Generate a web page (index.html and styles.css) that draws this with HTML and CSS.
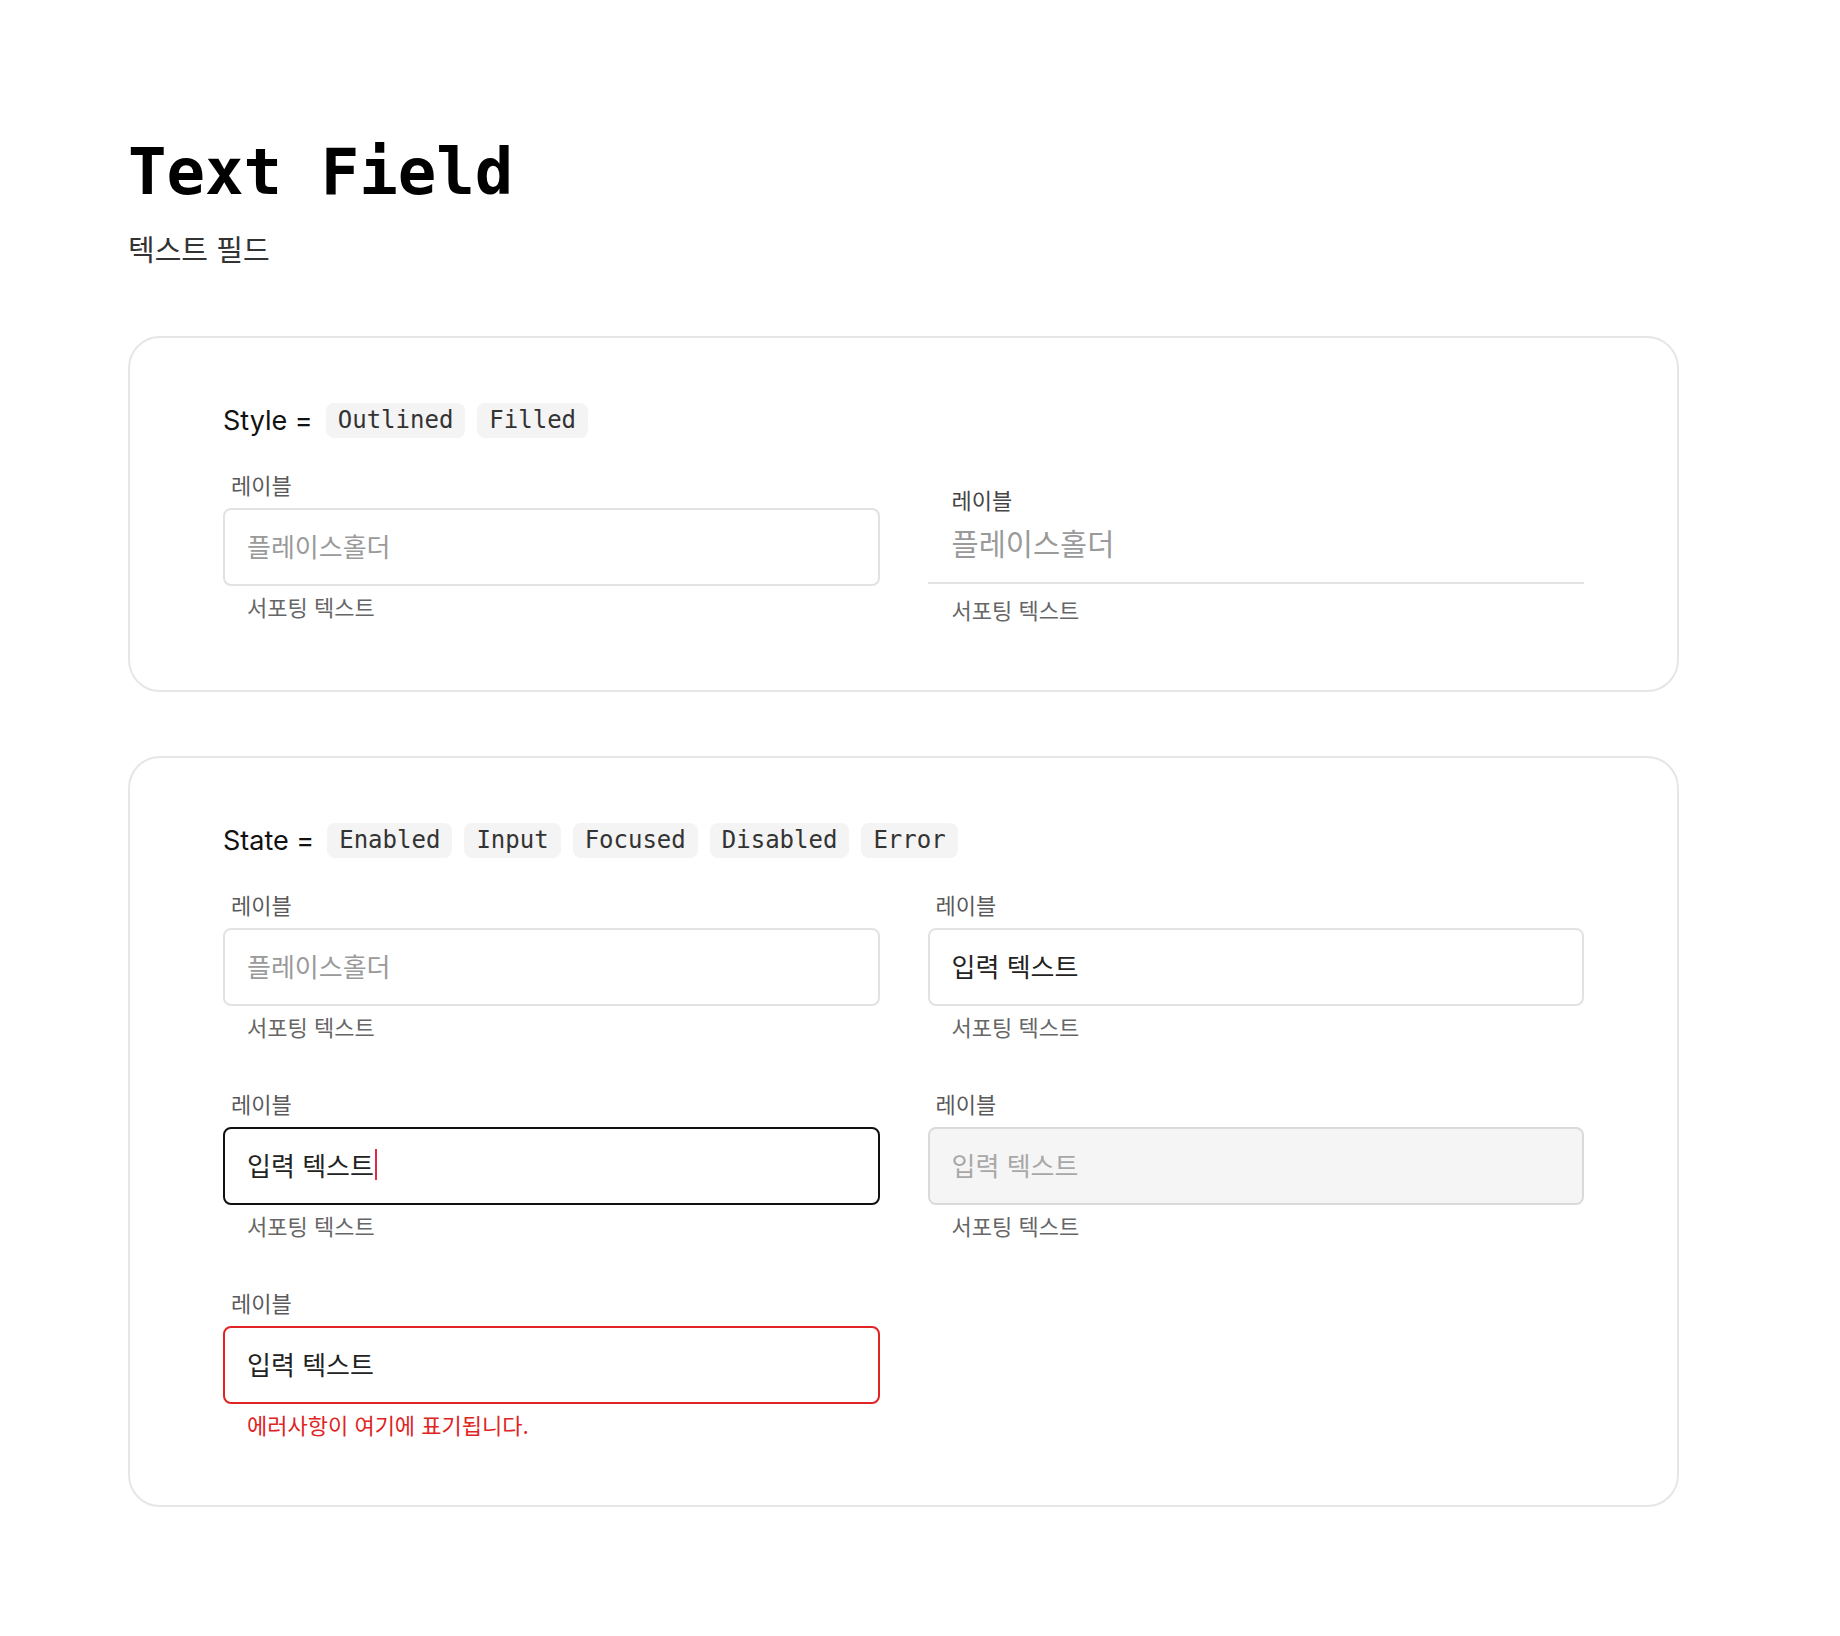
FILE: index.html
```html
<!DOCTYPE html>
<html lang="ko">
<head>
    <meta charset="UTF-8">
    <meta name="viewport" content="width=device-width, initial-scale=1.0">
    <title>Text Field</title>
    <link rel="stylesheet" href="styles.css">
</head>
<body>
    <main class="page">
        <h1 class="page-title">Text Field</h1>
        <p class="page-subtitle">텍스트 필드</p>

        <!-- Style variants -->
        <section class="card">
            <div class="prop-row">
                <span class="prop-name">Style =</span>
                <span class="chip">Outlined</span>
                <span class="chip">Filled</span>
            </div>
            <div class="field-grid">
                <div class="field">
                    <div class="field-label">레이블</div>
                    <div class="field-box is-placeholder">플레이스홀더</div>
                    <div class="field-help">서포팅 텍스트</div>
                </div>
                <div class="field">
                    <div class="filled-box">
                        <div class="filled-label">레이블</div>
                        <div class="filled-value">플레이스홀더</div>
                    </div>
                    <div class="field-help filled-help">서포팅 텍스트</div>
                </div>
            </div>
        </section>

        <!-- State variants -->
        <section class="card">
            <div class="prop-row">
                <span class="prop-name">State =</span>
                <span class="chip">Enabled</span>
                <span class="chip">Input</span>
                <span class="chip">Focused</span>
                <span class="chip">Disabled</span>
                <span class="chip">Error</span>
            </div>
            <div class="field-grid">
                <div class="field">
                    <div class="field-label">레이블</div>
                    <div class="field-box is-placeholder">플레이스홀더</div>
                    <div class="field-help">서포팅 텍스트</div>
                </div>
                <div class="field">
                    <div class="field-label">레이블</div>
                    <div class="field-box">입력 텍스트</div>
                    <div class="field-help">서포팅 텍스트</div>
                </div>
                <div class="field">
                    <div class="field-label">레이블</div>
                    <div class="field-box is-focused">입력 텍스트<span class="caret"></span></div>
                    <div class="field-help">서포팅 텍스트</div>
                </div>
                <div class="field">
                    <div class="field-label">레이블</div>
                    <div class="field-box is-disabled">입력 텍스트</div>
                    <div class="field-help">서포팅 텍스트</div>
                </div>
                <div class="field">
                    <div class="field-label">레이블</div>
                    <div class="field-box is-error">입력 텍스트</div>
                    <div class="field-help is-error">에러사항이 여기에 표기됩니다.</div>
                </div>
            </div>
        </section>
    </main>
</body>
</html>
```

FILE: styles.css
```css
* {
    box-sizing: border-box;
}

body {
    margin: 0;
    background: #fff;
    font-family: Inter, 'Noto Sans CJK KR', sans-serif;
    color: #222;
}

.page {
    width: 1551px;
    margin-left: 128px;
    padding: 140px 0 100px;
}

.page-title {
    margin: 0;
    font: 700 64px/64px 'DejaVu Sans Mono', monospace;
    color: #000;
}

.page-subtitle {
    margin: 29px 0 67px;
    font-size: 29px;
    line-height: 36px;
    color: #333;
}

.card {
    border: 2px solid #e6e6e6;
    border-radius: 32px;
    padding: 65px 93px 67px;
}

.card + .card {
    margin-top: 64px;
}

/* Property header: "Style = [chip] [chip]" */
.prop-row {
    display: flex;
    align-items: center;
    gap: 12px;
    margin-bottom: 36px;
}

.prop-name {
    font-size: 27px;
    color: #111;
    margin-right: 1px;
}

.chip {
    font: 24px/35px 'DejaVu Sans Mono', monospace;
    padding: 0 12px;
    background: #f4f4f4;
    border-radius: 8px;
    color: #333;
}

.field-grid {
    display: grid;
    grid-template-columns: 1fr 1fr;
    column-gap: 48px;
    row-gap: 53px;
    align-items: start;
}

/* Outlined field */
.field-label {
    font-size: 22px;
    line-height: 24px;
    color: #5a5a5a;
    padding-left: 8px;
    margin-bottom: 10px;
}

.field-box {
    display: flex;
    align-items: center;
    height: 78px;
    padding: 0 22px 4px;
    border: 2px solid #e2e2e2;
    border-radius: 8px;
    background: #fff;
    font-size: 26px;
    color: #222;
}

.field-box.is-placeholder {
    color: #9a9a9a;
}

.field-box.is-focused {
    border-color: #111;
}

.field-box.is-disabled {
    background: #f5f5f5;
    border-color: #dadada;
    color: #a8a8a8;
}

.field-box.is-error {
    border-color: #e02424;
}

.caret {
    display: inline-block;
    width: 2px;
    height: 31px;
    margin-left: 1px;
    background: #e0294a;
}

.field-help {
    margin-top: 10px;
    padding-left: 24px;
    font-size: 22px;
    line-height: 24px;
    color: #666;
}

.field-help.is-error {
    color: #e02424;
}

/* Filled field */
.filled-box {
    padding: 15px 24px 20px;
    border-bottom: 2px solid #e2e2e2;
}

.filled-label {
    font-size: 22px;
    line-height: 24px;
    color: #444;
}

.filled-value {
    margin-top: 13px;
    font-size: 29.5px;
    line-height: 36px;
    color: #9a9a9a;
}

.filled-help {
    margin-top: 15px;
}
```
